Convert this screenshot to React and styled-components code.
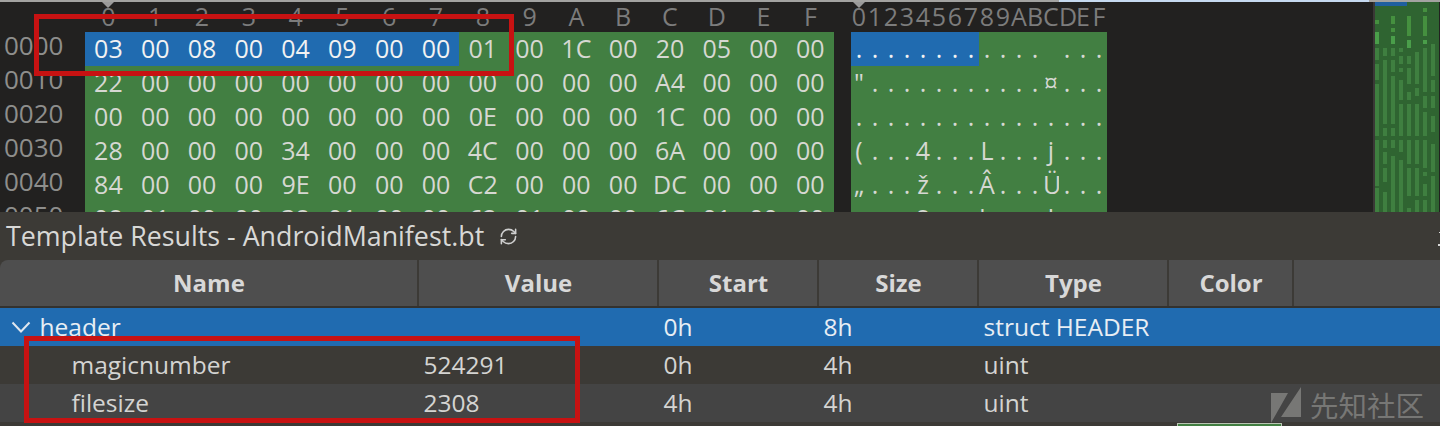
import React from 'react';
import styled, { createGlobalStyle } from 'styled-components';
import { RefreshCw } from 'lucide-react';

const GlobalStyle = createGlobalStyle`
    html, body {
        margin: 0;
        padding: 0;
        background: #3c3a36;
    }
    body {
        font-family: "Open Sans", "Noto Sans", sans-serif;
    }
`;

const HEX_HEAD = ['0', '1', '2', '3', '4', '5', '6', '7', '8', '9', 'A', 'B', 'C', 'D', 'E', 'F'];

const HEX_ROWS = [
    ['03', '00', '08', '00', '04', '09', '00', '00', '01', '00', '1C', '00', '20', '05', '00', '00'],
    ['22', '00', '00', '00', '00', '00', '00', '00', '00', '00', '00', '00', 'A4', '00', '00', '00'],
    ['00', '00', '00', '00', '00', '00', '00', '00', '0E', '00', '00', '00', '1C', '00', '00', '00'],
    ['28', '00', '00', '00', '34', '00', '00', '00', '4C', '00', '00', '00', '6A', '00', '00', '00'],
    ['84', '00', '00', '00', '9E', '00', '00', '00', 'C2', '00', '00', '00', 'DC', '00', '00', '00'],
    ['08', '01', '00', '00', '38', '01', '00', '00', '62', '01', '00', '00', '6C', '01', '00', '00'],
];

const TEXT_ROWS = [
    '............ ...',
    '"...........¤...',
    '................',
    '(...4...L...j...',
    '„...ž...Â...Ü...',
    '....8...b...l...',
];

const OFFSETS = ['0000', '0010', '0020', '0030', '0040', '0050'];

// y spans of the overview bars, one list per column: [from, to, bright]
const MINIMAP = [
    [[18, 22, 1], [30, 42, 2], [46, 58, 0], [62, 78, 0], [82, 134, 0], [138, 146, 0], [146, 184, 0], [186, 210, 0]],
    [[46, 54, 0], [58, 122, 0], [126, 134, 0], [138, 146, 0], [150, 162, 0], [166, 180, 0], [190, 210, 0]],
    [[14, 22, 1], [26, 30, 1], [34, 42, 2], [46, 54, 0], [58, 70, 0], [74, 122, 0], [126, 134, 0], [138, 146, 0], [154, 210, 0]],
    [[46, 50, 0], [54, 62, 0], [66, 70, 0], [78, 98, 0], [102, 134, 0], [138, 150, 0], [158, 210, 0]],
    [[14, 34, 1], [38, 46, 2], [54, 62, 0], [66, 82, 0], [90, 98, 0], [102, 134, 0], [138, 162, 0], [166, 194, 0], [206, 210, 0]],
    [[50, 82, 0], [86, 94, 0], [102, 134, 0], [138, 162, 0], [166, 194, 0], [198, 210, 0]],
    [[6, 10, 1], [14, 34, 1], [38, 42, 2], [46, 90, 0], [94, 106, 0], [110, 134, 0], [138, 166, 0], [170, 174, 0], [182, 194, 0], [198, 210, 0]],
    [[42, 74, 0], [78, 90, 0], [94, 106, 0], [114, 130, 0], [142, 170, 0], [174, 210, 0]],
];

const BAR_COLORS = ['#3f7f40', '#45903f', '#4a9e4a'];

const COLUMNS = [
    { label: 'Name' },
    { label: 'Value' },
    { label: 'Start' },
    { label: 'Size' },
    { label: 'Type' },
    { label: 'Color' },
    { label: '' },
];

const RESULTS = [
    { name: 'header', value: '', start: '0h', size: '8h', type: 'struct HEADER', open: true },
    { name: 'magicnumber', value: '524291', start: '0h', size: '4h', type: 'uint' },
    { name: 'filesize', value: '2308', start: '4h', size: '4h', type: 'uint' },
];

const chunk = (list) => [list.slice(0, 4), list.slice(4, 8), list.slice(8, 12), list.slice(12, 16)];

const Minimap = () => (
    <MinimapWrap>
        <svg width="64" height="210" viewBox="0 0 64 210">
            <rect width="64" height="210" fill="#2f6431" />
            {MINIMAP.map((spans, col) =>
                spans.map(([from, to, bright]) => (
                    <rect
                        key={`${col}-${from}`}
                        x={col * 8}
                        y={from}
                        width="4"
                        height={to - from}
                        fill={BAR_COLORS[bright]}
                    />
                ))
            )}
            <rect width="32" height="4" fill="#1f5f9e" />
        </svg>
    </MinimapWrap>
);

const App = () => {
    return (
        <Page>
            <GlobalStyle />
            <TopStrip>
                <StripPart $w="1059px" />
                <StripPart $w="310px" $light />
                <StripPart $w="71px" />
            </TopStrip>

            <HexPane>
                <OffsetColumn>
                    <HeadSpacer />
                    {OFFSETS.map((o) => (
                        <OffsetCell key={o}>{o}</OffsetCell>
                    ))}
                </OffsetColumn>

                <HexColumn>
                    <HeadRow>
                        {HEX_HEAD.map((h, i) => (
                            <HeadCell key={h} $w="46.8px" $marked={i === 0}>{h}</HeadCell>
                        ))}
                    </HeadRow>
                    {HEX_ROWS.map((row, r) => (
                        <ByteRow key={OFFSETS[r]}>
                            {chunk(row).map((group, g) => (
                                <ByteGroup key={g}>
                                    {group.map((b, i) => (
                                        <ByteCell key={i} $sel={r === 0 && g < 2}>{b}</ByteCell>
                                    ))}
                                </ByteGroup>
                            ))}
                        </ByteRow>
                    ))}
                </HexColumn>

                <TextColumn>
                    <HeadRow>
                        {HEX_HEAD.map((h, i) => (
                            <HeadCell key={h} $w="16px" $marked={i === 0}>{h}</HeadCell>
                        ))}
                    </HeadRow>
                    {TEXT_ROWS.map((row, r) => (
                        <ByteRow key={OFFSETS[r]}>
                            {Array.from(row).map((c, i) => (
                                <CharCell key={i} $sel={r === 0 && i < 8}>{c}</CharCell>
                            ))}
                        </ByteRow>
                    ))}
                </TextColumn>

                <Minimap />
            </HexPane>

            <ResultsPane>
                <TitleBar>
                    <Title>Template Results - AndroidManifest.bt</Title>
                    <RefreshCw size={19} color="#cfcfcf" strokeWidth={2} />
                    <EdgeMarks width="2" height="20" viewBox="0 0 2 20">
                        <rect x="1" y="6" width="1" height="1" fill="#d8d8d8" />
                        <rect y="18" width="2" height="2" fill="#d8d8d8" />
                    </EdgeMarks>
                </TitleBar>

                <TableHead>
                    {COLUMNS.map((c) => (
                        <HeadTitle key={c.label}>{c.label}</HeadTitle>
                    ))}
                </TableHead>

                {RESULTS.map((r, i) => (
                    <ResultRow key={r.name} $sel={r.open} $alt={i === 2}>
                        <NameCell $open={r.open}>
                            {r.open && (
                                <svg width="20" height="12" viewBox="0 0 20 12">
                                    <path d="M1.5 1.5 L10 10.5 L18.5 1.5" fill="none" stroke="#dfe6ee" strokeWidth="2" />
                                </svg>
                            )}
                            {r.name}
                        </NameCell>
                        <ResultCell>{r.value}</ResultCell>
                        <ResultCell>{r.start}</ResultCell>
                        <ResultCell>{r.size}</ResultCell>
                        <ResultCell>{r.type}</ResultCell>
                    </ResultRow>
                ))}

                <BottomStrip>
                    <PeekBox />
                </BottomStrip>
            </ResultsPane>

            <RedBox $left={34} $top={14} $w={480} $h={62} />
            <RedBox $left={24} $top={336} $w={556} $h={87} />

            <Watermark>
                <svg width="32" height="38" viewBox="0 0 32 38">
                    <path d="M0 6 H17 L0 36 Z M30 0 V30 H10 Z" fill="#777775" />
                </svg>
                <WatermarkText>先知社区</WatermarkText>
            </Watermark>
        </Page>
    );
};

const Page = styled.div`
    position: relative;
    width: 1440px;
    height: 426px;
    overflow: hidden;
    background: #3c3a36;
`;

const TopStrip = styled.div`
    display: flex;
    height: 2px;
`;

const StripPart = styled.div`
    width: ${(p) => p.$w};
    background: ${(p) => (p.$light ? '#c6daf0' : '#a3a3a1')};
`;

const HexPane = styled.div`
    display: flex;
    height: 210px;
    overflow: hidden;
    background: #222120;
`;

const OffsetColumn = styled.div`
    width: 85px;
    flex: none;
`;

const HeadSpacer = styled.div`
    height: 30px;
`;

const OffsetCell = styled.div`
    height: 34px;
    padding-left: 4px;
    box-sizing: border-box;
    font-size: 26px;
    line-height: 27px;
    color: #8e8e8c;
`;

const HexColumn = styled.div`
    width: 748.8px;
    flex: none;
`;

const TextColumn = styled.div`
    width: 256px;
    flex: none;
    margin-left: 17.2px;
`;

const HeadRow = styled.div`
    display: flex;
    height: 30px;
`;

const HeadCell = styled.div`
    position: relative;
    width: ${(p) => p.$w};
    flex: none;
    text-align: center;
    font-size: 25px;
    line-height: 28px;
    color: #7c7c7c;

    ${(p) =>
        p.$marked &&
        `&::before {
            content: '';
            position: absolute;
            top: 0;
            left: 50%;
            margin-left: -6px;
            border-left: 6px solid transparent;
            border-right: 6px solid transparent;
            border-top: 6px solid #9a9a9a;
        }`}
`;

const ByteRow = styled.div`
    display: flex;
    height: 34px;
`;

const ByteGroup = styled.div`
    position: relative;
    display: flex;
    width: 187.2px;
    flex: none;

    &:not(:last-child)::after {
        content: '';
        position: absolute;
        top: 0;
        right: -2px;
        width: 2px;
        height: 100%;
        background: #5d5d5b;
    }
`;

const ByteCell = styled.div`
    width: 46.8px;
    flex: none;
    text-align: center;
    font-size: 25px;
    line-height: 32px;
    color: ${(p) => (p.$sel ? '#f2f2f2' : '#d6d8d2')};
    background: ${(p) => (p.$sel ? '#206bb0' : '#427f42')};
`;

const CharCell = styled(ByteCell)`
    width: 16px;
    line-height: 33px;
`;

const MinimapWrap = styled.div`
    width: 64px;
    flex: none;
    margin-left: 266px;
    border-left: 2px solid #3a3836;

    svg {
        display: block;
    }
`;

const ResultsPane = styled.div`
    display: flex;
    flex-direction: column;
    height: 214px;
`;

const TitleBar = styled.div`
    display: flex;
    align-items: center;
    gap: 15px;
    height: 48px;
    padding-left: 6px;
    box-sizing: border-box;
`;

const Title = styled.span`
    font-size: 26.8px;
    line-height: 46px;
    color: #d8d8d6;
`;

const EdgeMarks = styled.svg`
    margin-left: auto;
`;

const TableHead = styled.div`
    display: grid;
    grid-template-columns: 419px 240px 160px 160px 190px 125px 1fr;
    height: 48px;
    border-bottom: 2px solid #33322f;
    box-sizing: border-box;
    background: #4e4e4e;
    border-radius: 8px 0 0 0;
`;

const HeadTitle = styled.div`
    padding-left: 1px;
    text-align: center;
    font-size: 24px;
    font-weight: 700;
    line-height: 46px;
    color: #d8d8d8;
    border-right: 2px solid #3c3a36;

    &:last-child {
        border-right: none;
    }
`;

const ResultRow = styled.div`
    display: grid;
    grid-template-columns: 418px 240px 160px 160px 1fr;
    height: 38px;
    line-height: 38px;
    font-size: 24.5px;
    color: ${(p) => (p.$sel ? '#e8eef4' : '#d4d4d2')};
    background: ${(p) => (p.$sel ? '#206bb0' : p.$alt ? '#444444' : '#3c3a36')};
`;

const ResultCell = styled.div`
    padding-left: 5.5px;
    white-space: nowrap;
`;

const NameCell = styled.div`
    display: flex;
    align-items: center;
    gap: 9px;
    padding-left: ${(p) => (p.$open ? '10.5px' : '71.5px')};
`;

const BottomStrip = styled.div`
    height: 4px;
    padding-left: 1177px;
    overflow: hidden;
`;

const PeekBox = styled.div`
    width: 105px;
    height: 10px;
    margin-top: 1px;
    box-sizing: border-box;
    border: 1px solid #b9c4b4;
    background: #427f42;
`;

const RedBox = styled.div`
    position: absolute;
    left: ${(p) => p.$left}px;
    top: ${(p) => p.$top}px;
    width: ${(p) => p.$w}px;
    height: ${(p) => p.$h}px;
    box-sizing: border-box;
    border: 5px solid #c71212;
`;

const Watermark = styled.div`
    position: absolute;
    left: 1271px;
    top: 387px;
    display: flex;
    align-items: flex-start;
    gap: 7px;
`;

const WatermarkText = styled.span`
    font-family: "Noto Sans CJK SC", sans-serif;
    font-size: 28.5px;
    line-height: 36px;
    color: #777775;
`;

export default App;
